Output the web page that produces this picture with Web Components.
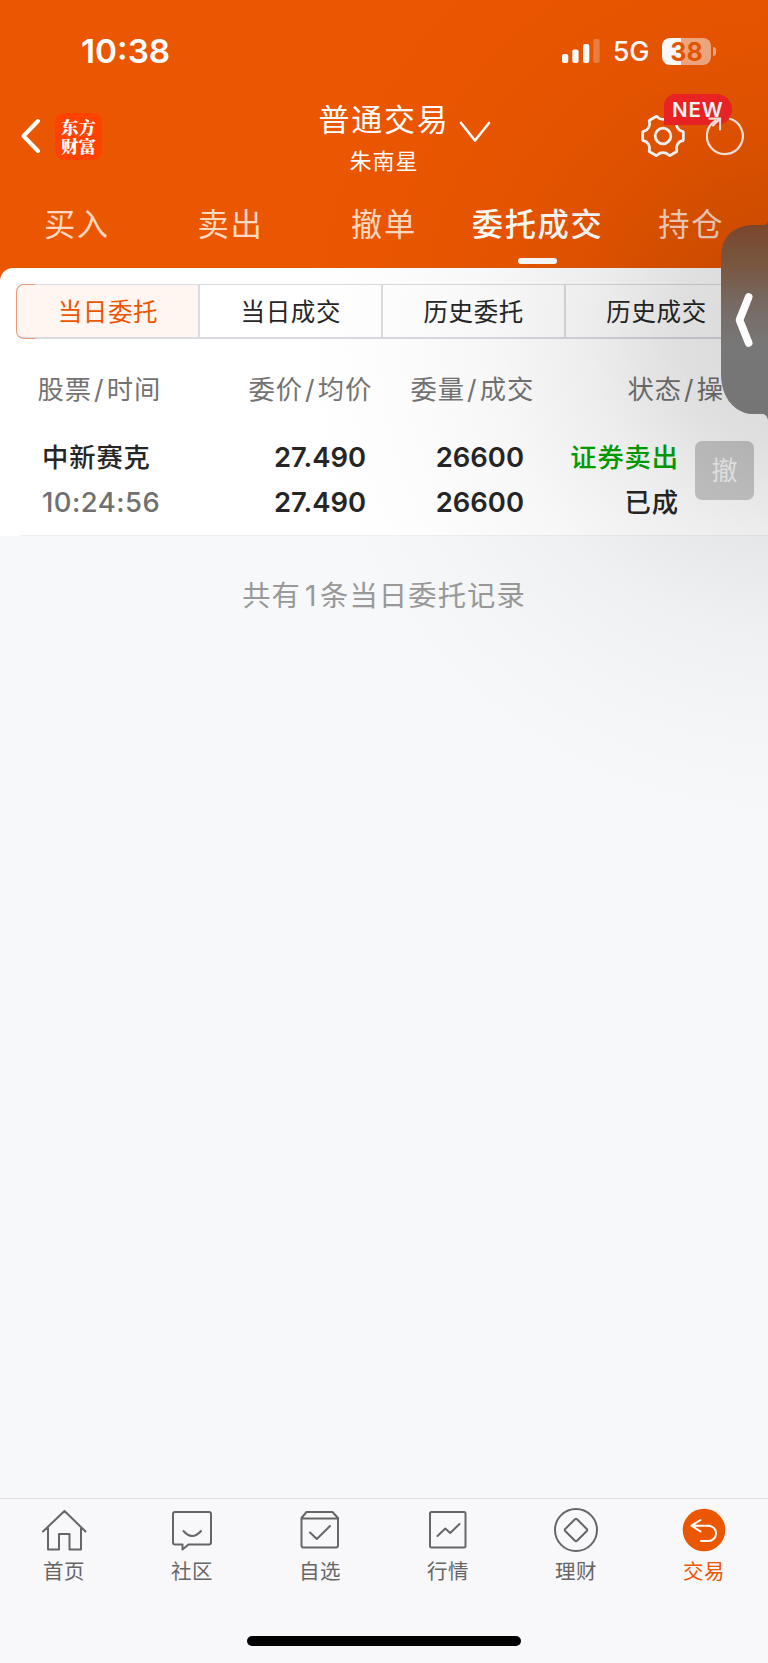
<!DOCTYPE html>
<html lang="zh-CN">
<head>
<meta charset="UTF-8">
<meta name="viewport" content="width=device-width, initial-scale=1.0">
<title>普通交易</title>
<style>
  html, body {
    margin: 0;
    height: 100%;
  }
  body {
    --primary-color: #eb5600;
    --page-bg: #f6f8fa;
    font-family: Inter, "Noto Sans CJK SC", sans-serif;
    color: #262626;
    background: var(--page-bg);
    overflow: hidden;
  }
</style>
</head>
<body>
<trade-app></trade-app>

<script>
class StatusBar extends HTMLElement {
  constructor() {
    super();
    this.attachShadow({ mode: 'open' });
    this.shadowRoot.innerHTML = `
      <style>
        :host {
          display: flex;
          align-items: center;
          height: 102px;
          padding: 0 52px 0 81px;
          box-sizing: border-box;
          color: #fff;
        }
        .time {
          flex: 1;
          font-size: 33.3px;
          font-weight: 600;
        }
        .signal {
          display: block;
          margin-right: 13px;
        }
        .network {
          font-size: 27px;
          font-weight: 500;
          margin-right: 12.5px;
        }
        .battery {
          width: 49px;
          height: 27px;
          border-radius: 8px;
          background: linear-gradient(90deg, #fff 39%, #f3aa80 39%);
          color: var(--primary-color);
          font-size: 25px;
          font-weight: 700;
          line-height: 28px;
          text-align: center;
        }
        .nub {
          width: 3px;
          height: 9px;
          margin-left: 2px;
          border-radius: 0 4px 4px 0;
          background: #f3aa80;
        }
      </style>
      <div class="time">10:38</div>
      <svg class="signal" width="38" height="24" viewBox="0 0 38 24" fill="#fff">
        <rect x="0" y="15" width="6.3" height="9" rx="2"/>
        <rect x="10.3" y="10.5" width="6.3" height="13.5" rx="2"/>
        <rect x="21" y="5" width="6.3" height="19" rx="2"/>
        <rect x="31.3" y="0" width="6.3" height="24" rx="2" opacity=".25"/>
      </svg>
      <div class="network">5G</div>
      <div class="battery">38</div>
      <div class="nub"></div>
    `;
  }
}

class TradeHeader extends HTMLElement {
  constructor() {
    super();
    this.attachShadow({ mode: 'open' });
    this.shadowRoot.innerHTML = `
      <style>
        :host {
          display: grid;
          grid-template-columns: 1fr auto 1fr;
          height: 78px;
          color: #fff;
        }
        svg {
          display: block;
        }
        .left {
          display: flex;
          align-items: center;
          height: 68px;
          padding-left: 20px;
        }
        .logo {
          width: 35px;
          height: 39px;
          padding: 4px 6px;
          margin-left: 14px;
          border-radius: 9px;
          background: #ff4200;
          font-family: "Noto Serif CJK SC", "Noto Sans CJK SC", sans-serif;
          font-size: 17.5px;
          font-weight: 900;
          line-height: 19.5px;
          word-break: break-all;
        }
        .center {
          position: relative;
          text-align: center;
        }
        .title {
          height: 38px;
          font-size: 31px;
          line-height: 36px;
          letter-spacing: 1.7px;
        }
        .user {
          font-size: 22px;
          line-height: 42px;
          letter-spacing: 1px;
        }
        .arrow {
          position: absolute;
          left: calc(100% + 10px);
          top: 19px;
        }
        .right {
          display: flex;
          justify-content: flex-end;
          align-items: center;
          height: 68px;
          padding-right: 24.5px;
          gap: 21px;
        }
        .settings {
          position: relative;
        }
        .badge {
          position: absolute;
          left: 23px;
          top: -20.5px;
          width: 68.5px;
          height: 31.5px;
          border-radius: 12px 16px 16px 0;
          background: #f42427;
          font-size: 20.5px;
          font-weight: 600;
          line-height: 31px;
          letter-spacing: .8px;
          text-align: center;
        }
        .refresh {
          position: relative;
        }
      </style>
      <div class="left">
        <svg width="21" height="36" viewBox="0 0 21 36" fill="none" stroke="#fff" stroke-width="4" stroke-linecap="round" stroke-linejoin="round">
          <path d="M18 3 3.5 18 18 33"/>
        </svg>
        <div class="logo">东方财富</div>
      </div>
      <div class="center">
        <div class="title"><slot name="title"></slot></div>
        <div class="user"><slot name="user"></slot></div>
        <svg class="arrow" width="32" height="22" viewBox="0 0 32 22" fill="none" stroke="#fff" stroke-width="2.6" stroke-linecap="round" stroke-linejoin="round">
          <path d="M2 2 16 19.5 30 2"/>
        </svg>
      </div>
      <div class="right">
        <div class="settings">
          <svg width="44" height="44" viewBox="-22 -22 44 44" fill="none" stroke="#fff" stroke-width="2.8" stroke-linejoin="round">
            <path id="gear"/>
            <circle r="7.8"/>
          </svg>
          <div class="badge">NEW</div>
        </div>
        <svg class="refresh" width="38" height="44" viewBox="-19 -22 38 44" fill="none" stroke="#ffeee4" stroke-width="2.2" stroke-linecap="round">
          <path d="M5 -17.2A18 18 0 1 1 -9.2 -15.5"/>
          <path d="M-15.5 -17.3H-5V-6.5M-5 -17.3-12 -10.5"/>
        </svg>
      </div>
    `;
  }

  connectedCallback() {
    // six teeth with round notches between them
    let d = '';
    for (let i = 0; i < 6; i++) {
      const point = (radius, deg) => {
        const a = (i * 60 + deg) * Math.PI / 180;
        return `${(radius * Math.cos(a)).toFixed(2)} ${(radius * Math.sin(a)).toFixed(2)}`;
      };
      d += `${i === 0 ? 'M' : 'L'}${point(20.6, -9)}L${point(20.6, 9)}`;
      d += `Q${point(20.9, 12.5)} ${point(19.4, 14.5)}`;
      d += `C${point(16.3, 20)} ${point(16.3, 40)} ${point(19.4, 45.5)}`;
      d += `Q${point(20.9, 47.5)} ${point(20.6, 51)}`;
    }
    this.shadowRoot.querySelector('#gear').setAttribute('d', d + 'Z');
  }
}

class TradeTab extends HTMLElement {
  constructor() {
    super();
    this.attachShadow({ mode: 'open' });
    this.shadowRoot.innerHTML = `
      <style>
        :host {
          display: flex;
          flex-direction: column;
          align-items: center;
          flex: 1 0 0;
          color: #ffd9c2;
          font-size: 31.3px;
          line-height: 44px;
          letter-spacing: 1.6px;
          white-space: nowrap;
        }
        :host([active]) {
          color: #fff;
          font-weight: 500;
        }
        :host([active]) .line {
          width: 39px;
          height: 6px;
          margin-top: 11px;
          border-radius: 3px;
          background: #fff;
        }
      </style>
      <div class="label"><slot></slot></div>
      <div class="line"></div>
    `;
  }
}

class SegmentControl extends HTMLElement {
  constructor() {
    super();
    this.attachShadow({ mode: 'open' });
    const labels = this.getAttribute('items').split(',');
    this.shadowRoot.innerHTML = `
      <style>
        :host {
          display: grid;
          grid-template-columns: repeat(4, 1fr);
          height: 55px;
          margin: 0 21px 0 15.5px;
          box-sizing: border-box;
          border: solid #d9dbe1;
          border-width: 1px 0 2px;
          border-radius: 8px;
        }
        .item {
          height: 52px;
          border-left: 2px solid #d9dbe1;
          font-size: 24.5px;
          line-height: 54px;
          letter-spacing: .6px;
          text-align: center;
        }
        .item.active {
          position: relative;
          border-left-color: transparent;
          border-radius: 8px 0 0 8px;
          background: #fff5f1;
          color: var(--primary-color);
        }
        /* coloured end of the frame */
        .item.active::before {
          content: "";
          position: absolute;
          left: -2px;
          top: -1px;
          bottom: -2px;
          width: 18px;
          border: solid #ec9a76;
          border-width: 1px 0 1px 1px;
          border-radius: 8px 0 0 8px;
        }
      </style>
      ${labels.map((label, i) => `<div class="item${i === 0 ? ' active' : ''}">${label}</div>`).join('')}
    `;
  }
}

class OrderTable extends HTMLElement {
  constructor() {
    super();
    this.attachShadow({ mode: 'open' });
    this.shadowRoot.innerHTML = `
      <style>
        :host {
          display: block;
        }
        .head, .row {
          display: grid;
          align-items: center;
        }
        .head {
          grid-template-columns: 211px 162px 217px 1fr;
          height: 48px;
          margin-top: 24px;
          padding-left: 37.5px;
          color: #737373;
          font-size: 26.3px;
          letter-spacing: .9px;
          white-space: nowrap;
        }
        .slash {
          margin: 0 2.5px 0 2px;
        }
        .row {
          grid-template-columns: 150px 174px 158px 154px 59px;
          height: 110px;
          padding: 14px 0 0 42px;
          font-size: 27.4px;
          font-weight: 600;
          line-height: 45px;
          text-align: right;
          white-space: nowrap;
        }
        .row .stock {
          text-align: left;
        }
        .cn {
          font-size: 26.3px;
          font-weight: 500;
          letter-spacing: .9px;
          margin-right: -1px;
        }
        .time {
          color: #707070;
          font-size: 27.4px;
          font-weight: 550;
          letter-spacing: .5px;
        }
        .sell {
          color: #00a400;
        }
        .cancel {
          align-self: start;
          width: 59px;
          height: 59px;
          margin: 16px 0 0 17px;
          border-radius: 7px;
          background: #ccc;
          color: #f6f6f6;
          font-size: 26px;
          font-weight: 400;
          line-height: 59px;
          text-align: center;
        }
        .rule {
          height: 1px;
          margin-left: 20px;
          background: #f0f0f2;
        }
      </style>
      <div class="head">
        <span>股票<span class="slash">/</span>时间</span>
        <span>委价<span class="slash">/</span>均价</span>
        <span>委量<span class="slash">/</span>成交</span>
        <span>状态<span class="slash">/</span>操作</span>
      </div>
      <div class="row">
        <div class="stock"><div class="cn">中新赛克</div><div class="time">10:24:56</div></div>
        <div><div>27.490</div><div>27.490</div></div>
        <div><div>26600</div><div>26600</div></div>
        <div><div class="cn sell">证券卖出</div><div class="cn">已成</div></div>
        <div class="cancel">撤</div>
      </div>
      <div class="rule"></div>
    `;
  }
}

class NavItem extends HTMLElement {
  constructor() {
    super();
    this.attachShadow({ mode: 'open' });
    this.shadowRoot.innerHTML = `
      <style>
        :host {
          display: flex;
          flex-direction: column;
          align-items: center;
          flex: 1;
          color: #666;
          font-size: 20.5px;
          line-height: 30px;
          letter-spacing: .6px;
        }
        :host([active]) {
          color: var(--primary-color);
        }
        svg {
          display: block;
          width: 46px;
          height: 46px;
          margin-bottom: 4px;
          fill: none;
          stroke: currentColor;
          stroke-width: 2;
          stroke-linecap: round;
          stroke-linejoin: round;
        }
      </style>
      <svg viewBox="0 0 46 46">${NavItem.icons[this.getAttribute('icon')]}</svg>
      <slot></slot>
    `;
  }
}

NavItem.icons = {
  home: '<path d="M2 24.5 23.5 4 44.5 24.5M7 21V42.5H18V27H28.5V42.5H40V21"/>',
  community: '<path d="M6 5H40Q42 5 42 7V35.5Q42 37.5 40 37.5H19.5L13.5 42.5V37.5H6Q4 37.5 4 35.5V7Q4 5 6 5Z"/><path d="M14.5 24Q23 34 32 24"/>',
  watch: '<path d="M4.5 11 9.5 5H35.5L41 11V38Q41 40.5 39 40.5H6.5Q4.5 40.5 4.5 38ZM4.5 11.5H41M13 25.5 19.8 32 33 19"/>',
  market: '<rect x="5" y="5" width="35.5" height="35.5" rx="1.5"/><path d="M12.5 29 20.3 21.5 25.2 26 34.5 17"/>',
  wealth: '<circle cx="23" cy="23" r="21"/><path d="M22 12.2Q23 11.3 24 12.2L33.8 22Q34.7 23 33.8 24L24 33.8Q23 34.7 22 33.8L12.2 24Q11.3 23 12.2 22Z"/>',
  trade: '<circle cx="23" cy="23" r="21.3" fill="currentColor" stroke="none"/><path stroke="#fff" stroke-width="2" d="M19.5 13 10.5 18.7 19.5 24.5M10.5 18.7H27.5A7.6 7.6 0 0 1 27.5 33.9H20"/>'
};

class BottomNav extends HTMLElement {
  constructor() {
    super();
    this.attachShadow({ mode: 'open' });
    this.shadowRoot.innerHTML = `
      <style>
        :host {
          display: flex;
          flex-direction: column;
          height: 165px;
          box-sizing: border-box;
          padding-top: 8px;
          border-top: 1px solid #dedfe1;
          background: #f8f8fa;
        }
        .items {
          display: flex;
          flex: 1;
        }
        .indicator {
          width: 274px;
          height: 10px;
          margin: 0 auto 17px;
          border-radius: 5px;
          background: #000;
        }
      </style>
      <div class="items"><slot></slot></div>
      <div class="indicator"></div>
    `;
  }
}

class SideHandle extends HTMLElement {
  constructor() {
    super();
    this.attachShadow({ mode: 'open' });
    this.shadowRoot.innerHTML = `
      <style>
        :host {
          display: block;
          position: absolute;
          inset: 0;
          overflow: hidden;
          pointer-events: none;
        }
        .shade {
          position: absolute;
          inset: 0;
          background: radial-gradient(circle at 790px 335px, rgba(0,0,0,.15) 0, rgba(0,0,0,.125) 110px, rgba(0,0,0,.07) 200px, rgba(0,0,0,.033) 300px, rgba(0,0,0,.01) 400px, transparent 490px);
        }
        svg {
          position: absolute;
          right: 0;
          top: 220px;
        }
      </style>
      <div class="shade"></div>
      <svg width="48" height="206" viewBox="720 220 48 206">
        <defs>
          <linearGradient id="glass" x1="0" y1="225" x2="0" y2="415" gradientUnits="userSpaceOnUse">
            <stop offset="0" stop-color="#7a472d"/>
            <stop offset=".2" stop-color="#78563f"/>
            <stop offset=".42" stop-color="#776a63"/>
            <stop offset=".62" stop-color="#777"/>
            <stop offset="1" stop-color="#757575"/>
          </linearGradient>
        </defs>
        <path fill="url(#glass)" d="M768 221Q767 225 763 225H751Q721 228 721 258V374C721 398 735 412 750 414H763Q767 415 768 420Z"/>
        <path fill="none" stroke="#fff" stroke-width="7.6" stroke-linecap="round" stroke-linejoin="round" d="M748.7 297 739.5 320 748.7 343"/>
      </svg>
    `;
  }
}

class TradeApp extends HTMLElement {
  constructor() {
    super();
    this.attachShadow({ mode: 'open' });
    this.shadowRoot.innerHTML = `
      <style>
        :host {
          display: flex;
          flex-direction: column;
          position: relative;
          height: 1663px;
          overflow: hidden;
        }
        .top {
          background: var(--primary-color);
        }
        .tabs {
          display: flex;
          height: 65px;
          padding-top: 23px;
        }
        .panel {
          padding-top: 16px;
          border-radius: 13px 0 0 0;
          background: #fff;
        }
        .main {
          flex: 1;
        }
        .summary {
          margin: 39px 0 0;
          color: #999;
          font-size: 28.3px;
          line-height: 42px;
          letter-spacing: 1.1px;
          text-align: center;
        }
        .count {
          margin: 0 2.5px 0 4px;
        }
      </style>
      <div class="top">
        <status-bar></status-bar>
        <trade-header>
          <span slot="title">普通交易</span>
          <span slot="user">朱南星</span>
        </trade-header>
        <div class="tabs">
          <trade-tab>买入</trade-tab>
          <trade-tab>卖出</trade-tab>
          <trade-tab>撤单</trade-tab>
          <trade-tab active>委托成交</trade-tab>
          <trade-tab>持仓</trade-tab>
        </div>
        <div class="panel">
          <segment-control items="当日委托,当日成交,历史委托,历史成交"></segment-control>
          <order-table></order-table>
        </div>
      </div>
      <div class="main">
        <p class="summary">共有<span class="count">1</span>条当日委托记录</p>
      </div>
      <bottom-nav>
        <nav-item icon="home">首页</nav-item>
        <nav-item icon="community">社区</nav-item>
        <nav-item icon="watch">自选</nav-item>
        <nav-item icon="market">行情</nav-item>
        <nav-item icon="wealth">理财</nav-item>
        <nav-item icon="trade" active>交易</nav-item>
      </bottom-nav>
      <side-handle></side-handle>
    `;
  }
}

customElements.define('status-bar', StatusBar);
customElements.define('trade-header', TradeHeader);
customElements.define('trade-tab', TradeTab);
customElements.define('segment-control', SegmentControl);
customElements.define('order-table', OrderTable);
customElements.define('nav-item', NavItem);
customElements.define('bottom-nav', BottomNav);
customElements.define('side-handle', SideHandle);
customElements.define('trade-app', TradeApp);
</script>
</body>
</html>
